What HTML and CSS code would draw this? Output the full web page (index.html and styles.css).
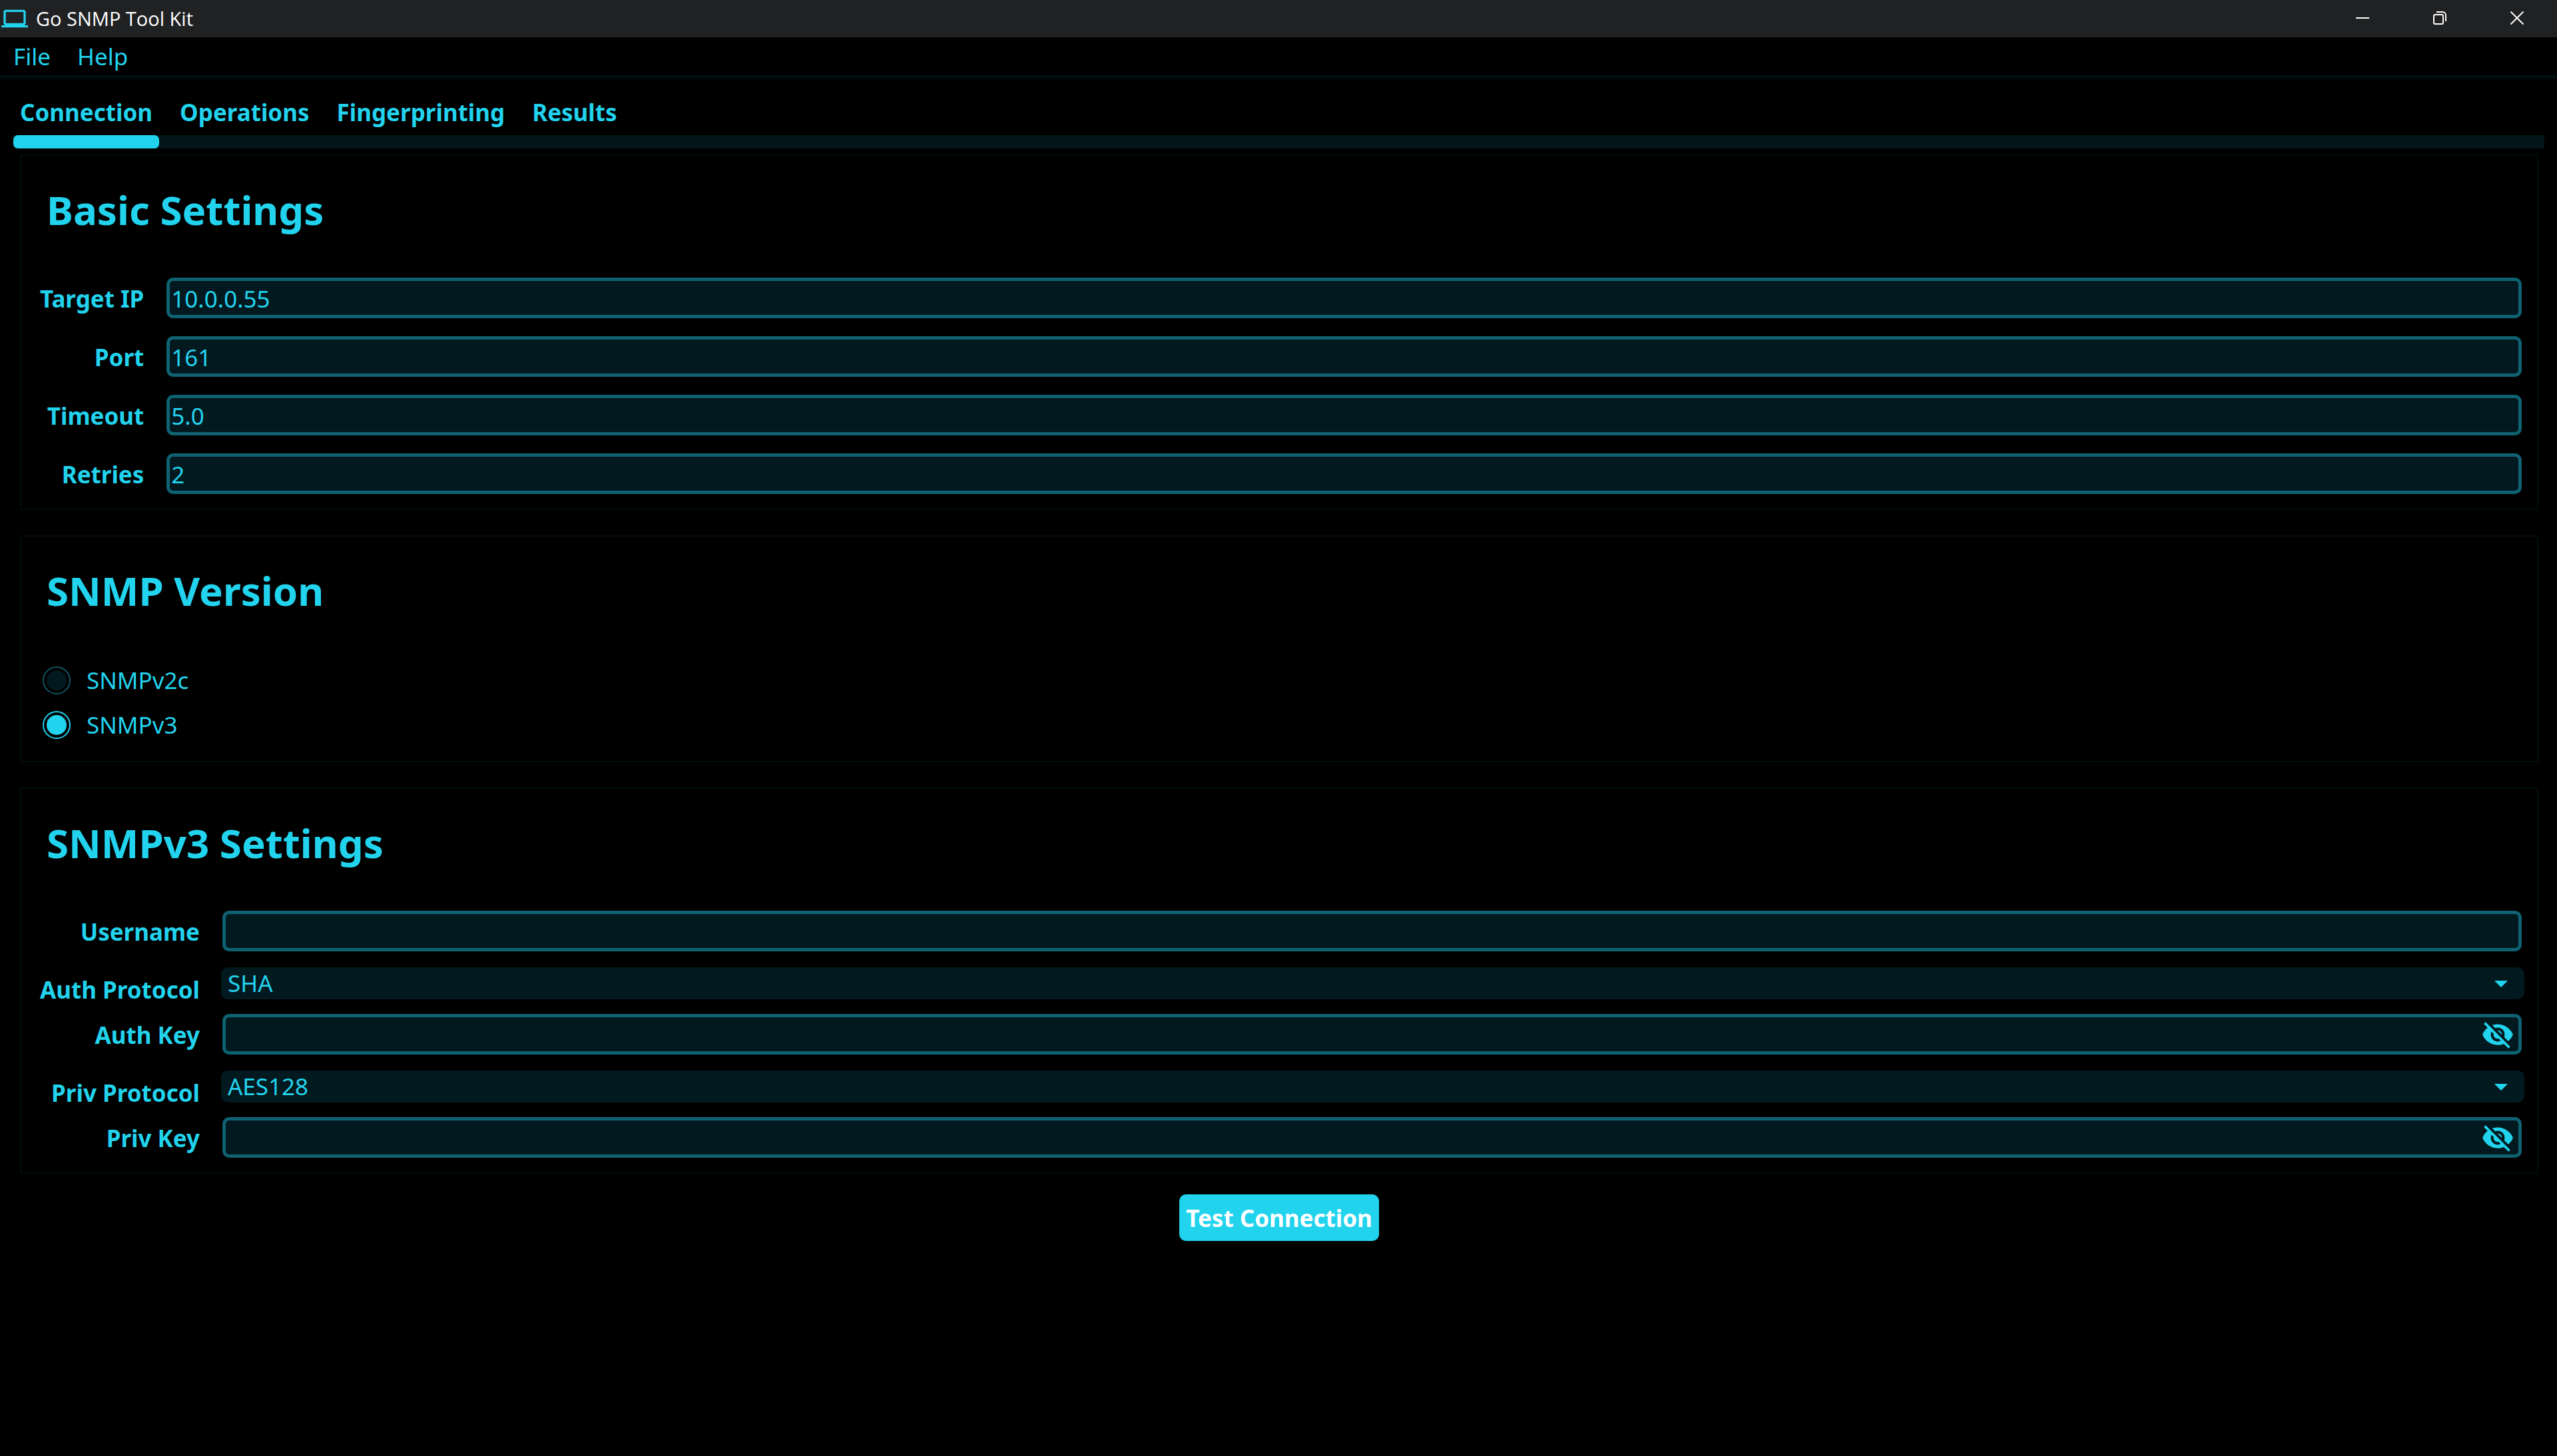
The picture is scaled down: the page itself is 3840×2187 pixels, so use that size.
FILE: index.html
```html
<!DOCTYPE html>
<html lang="en">
<head>
<meta charset="utf-8">
<title>Go SNMP Tool Kit</title>
<link rel="stylesheet" href="styles.css">
</head>
<body>
<svg class="sprite" aria-hidden="true">
  <symbol id="icon-hidden" viewBox="0 0 24 24">
    <path d="M12 7c2.76 0 5 2.24 5 5 0 .65-.13 1.26-.36 1.83l2.92 2.92c1.51-1.26 2.7-2.89 3.43-4.75-1.73-4.39-6-7.5-11-7.5-1.4 0-2.74.25-3.98.7l2.16 2.16C10.74 7.13 11.35 7 12 7zM2 4.27l2.28 2.28.46.46C3.08 8.3 1.78 10.02 1 12c1.73 4.39 6 7.5 11 7.5 1.55 0 3.03-.3 4.38-.84l.42.42L19.73 22 21 20.73 3.27 3 2 4.27zM7.53 9.8l1.55 1.55c-.05.21-.08.43-.08.65 0 1.66 1.34 3 3 3 .22 0 .44-.03.65-.08l1.55 1.55c-.67.33-1.41.53-2.2.53-2.76 0-5-2.24-5-5 0-.79.2-1.53.53-2.2zm4.31-.78l3.15 3.15.02-.16c0-1.66-1.34-3-3-3l-.17.01z"/>
  </symbol>
  <symbol id="icon-arrow" viewBox="0 0 20 10">
    <path d="M0 0h20L10 10z"/>
  </symbol>
</svg>

<header class="titlebar">
  <svg class="app-icon" viewBox="0 0 24 24" aria-hidden="true"><path d="M20 18c1.1 0 1.99-.9 1.99-2L22 6c0-1.1-.9-2-2-2H4c-1.1 0-2 .9-2 2v10c0 1.1.9 2 2 2H0v2h24v-2h-4zM4 6h16v10H4V6z"/></svg>
  <span class="app-title">Go SNMP Tool Kit</span>
  <div class="window-controls">
    <button type="button" aria-label="Minimize"><svg viewBox="0 0 20 20"><path d="M0 10h20"/></svg></button>
    <button type="button" aria-label="Restore"><svg viewBox="0 0 20 20"><rect x="1" y="5" width="14" height="14" rx="2"/><path d="M5 1h9a5 5 0 0 1 5 5v9"/></svg></button>
    <button type="button" aria-label="Close"><svg viewBox="0 0 20 20"><path d="M0.500 0.500l19 19M19.500 0.500l-19 19"/></svg></button>
  </div>
</header>

<nav class="menubar">
  <a href="#file">File</a>
  <a href="#help">Help</a>
</nav>

<nav class="tabs">
  <a class="tab active" href="#connection">Connection</a>
  <a class="tab" href="#operations">Operations</a>
  <a class="tab" href="#fingerprinting">Fingerprinting</a>
  <a class="tab" href="#results">Results</a>
</nav>

<main>
  <form class="settings">
    <section class="card">
      <h2>Basic Settings</h2>
      <div class="form-grid basic">
        <label for="target">Target IP</label>
        <div class="field"><input id="target" type="text" value="10.0.0.55"></div>
        <label for="port">Port</label>
        <div class="field"><input id="port" type="text" value="161"></div>
        <label for="timeout">Timeout</label>
        <div class="field"><input id="timeout" type="text" value="5.0"></div>
        <label for="retries">Retries</label>
        <div class="field"><input id="retries" type="text" value="2"></div>
      </div>
    </section>

    <section class="card">
      <h2>SNMP Version</h2>
      <div class="radios">
        <label class="radio"><input type="radio" name="version">SNMPv2c</label>
        <label class="radio"><input type="radio" name="version" checked>SNMPv3</label>
      </div>
    </section>

    <section class="card">
      <h2>SNMPv3 Settings</h2>
      <div class="form-grid secure">
        <label for="username">Username</label>
        <div class="field"><input id="username" type="text"></div>
        <label class="for-select" for="auth-protocol">Auth Protocol</label>
        <div class="select">
          <select id="auth-protocol"><option>SHA</option></select>
          <svg class="arrow" aria-hidden="true"><use href="#icon-arrow"/></svg>
        </div>
        <label for="auth-key">Auth Key</label>
        <div class="field">
          <input id="auth-key" type="password">
          <button class="reveal" type="button" aria-label="Show auth key"><svg><use href="#icon-hidden"/></svg></button>
        </div>
        <label class="for-select" for="priv-protocol">Priv Protocol</label>
        <div class="select">
          <select id="priv-protocol"><option>AES128</option></select>
          <svg class="arrow" aria-hidden="true"><use href="#icon-arrow"/></svg>
        </div>
        <label for="priv-key">Priv Key</label>
        <div class="field">
          <input id="priv-key" type="password">
          <button class="reveal" type="button" aria-label="Show priv key"><svg><use href="#icon-hidden"/></svg></button>
        </div>
      </div>
    </section>

    <button class="primary" type="button">Test Connection</button>
  </form>
</main>
</body>
</html>
```
FILE: styles.css
```css
:root {
  --accent: #22d3ee;
  --field: #021a1f;
  --field-border: #0f6272;
  --faint: #010d0f;
}

* {
  box-sizing: border-box;
}

body {
  margin: 0;
  min-height: 100vh;
  background: #000;
  color: var(--accent);
  font: 35px/48px "Noto Sans", sans-serif;
}

button,
input,
select {
  margin: 0;
  font: inherit;
  color: inherit;
}

a {
  color: inherit;
  text-decoration: none;
}

svg {
  display: block;
  fill: currentColor;
}

.sprite {
  display: none;
}

/* Window frame */
.titlebar {
  display: flex;
  align-items: center;
  gap: 12px;
  height: 56px;
  padding: 0 2px;
  background: #202123;
}

.app-icon {
  width: 40px;
  height: 40px;
}

.app-title {
  flex: 1;
  color: #fff;
  font: 29px/40px "Open Sans", "Noto Sans", sans-serif;
}

.window-controls {
  display: flex;
  align-self: flex-start;
}

.window-controls button {
  display: grid;
  place-items: center;
  width: 116px;
  height: 54px;
  padding: 0;
  border: 0;
  background: none;
  color: #fff;
}

.window-controls svg {
  width: 20px;
  height: 20px;
  fill: none;
  stroke: currentColor;
  stroke-width: 2;
}

.menubar {
  display: flex;
  gap: 40px;
  padding: 5px 20px 4px;
}

/* Tabs */
.tabs {
  position: relative;
  display: flex;
  gap: 21px;
  padding: 32px 20px 20px;
  background: linear-gradient(#031518, #000 8px);
  font-weight: 700;
}

.tabs::after {
  content: "";
  position: absolute;
  right: 19px;
  bottom: 0;
  left: 20px;
  height: 20px;
  background: #031518;
}

.tab {
  padding: 0 10px 10px;
}

.tab.active {
  position: relative;
}

.tab.active::after {
  content: "";
  position: absolute;
  z-index: 1;
  top: 100%;
  left: 0;
  width: 100%;
  height: 20px;
  border-radius: 7px;
  background: var(--accent);
}

/* Cards */
.settings {
  display: flex;
  flex-direction: column;
  gap: 38px;
  padding: 9px 28px 0 30px;
}

.card {
  padding: 40px 19px 22px 28px;
  border: 2px solid var(--faint);
}

h2 {
  margin: 0 0 61px;
  padding-left: 10px;
  font-size: 60px;
  line-height: 82px;
  font-weight: 700;
}

.form-grid {
  display: grid;
  grid-template-columns: auto 1fr;
  column-gap: 32px;
}

.form-grid.basic {
  row-gap: 27px;
}

.form-grid.secure {
  row-gap: 12px;
}

.form-grid label {
  padding-top: 8px;
  font-weight: 700;
  text-align: right;
}

.form-grid .for-select {
  padding-top: 10px;
}

.field {
  position: relative;
  padding: 0 4px 0 2px;
}

.secure .field:not(:last-child) {
  padding-bottom: 12px;
}

.field input {
  display: block;
  width: 100%;
  height: 61px;
  padding: 2px 2px 0;
  border: 5px solid var(--field-border);
  border-radius: 10px;
  outline: 0;
  background: var(--field);
}

.reveal {
  position: absolute;
  top: 6px;
  right: 15px;
  width: 50px;
  height: 50px;
  padding: 0;
  border: 0;
  background: none;
}

.reveal svg {
  width: 50px;
  height: 50px;
}

.select {
  position: relative;
}

.select select {
  display: block;
  width: 100%;
  height: 48px;
  padding: 0 10px;
  border: 0;
  border-radius: 10px;
  outline: 0;
  appearance: none;
  background: var(--field);
}

.arrow {
  position: absolute;
  top: 20px;
  right: 25px;
  width: 20px;
  height: 10px;
  pointer-events: none;
}

/* Version choice */
.radios {
  display: grid;
  justify-content: start;
  gap: 19px;
  padding: 9px 0 8px 4px;
}

.radio {
  display: flex;
  align-items: center;
  gap: 24px;
}

.radio input {
  width: 42px;
  height: 42px;
  appearance: none;
  border: 2px solid #0f5662;
  border-radius: 50%;
  background: var(--field) content-box;
  padding: 4px;
}

.radio input:checked {
  border-color: var(--accent);
  background: var(--accent) content-box;
}

.primary {
  align-self: center;
  height: 70px;
  margin-top: -7px;
  padding: 2px 10px 0;
  border: 0;
  border-radius: 10px;
  background: var(--accent);
  color: #fff;
  font-weight: 700;
}
```
